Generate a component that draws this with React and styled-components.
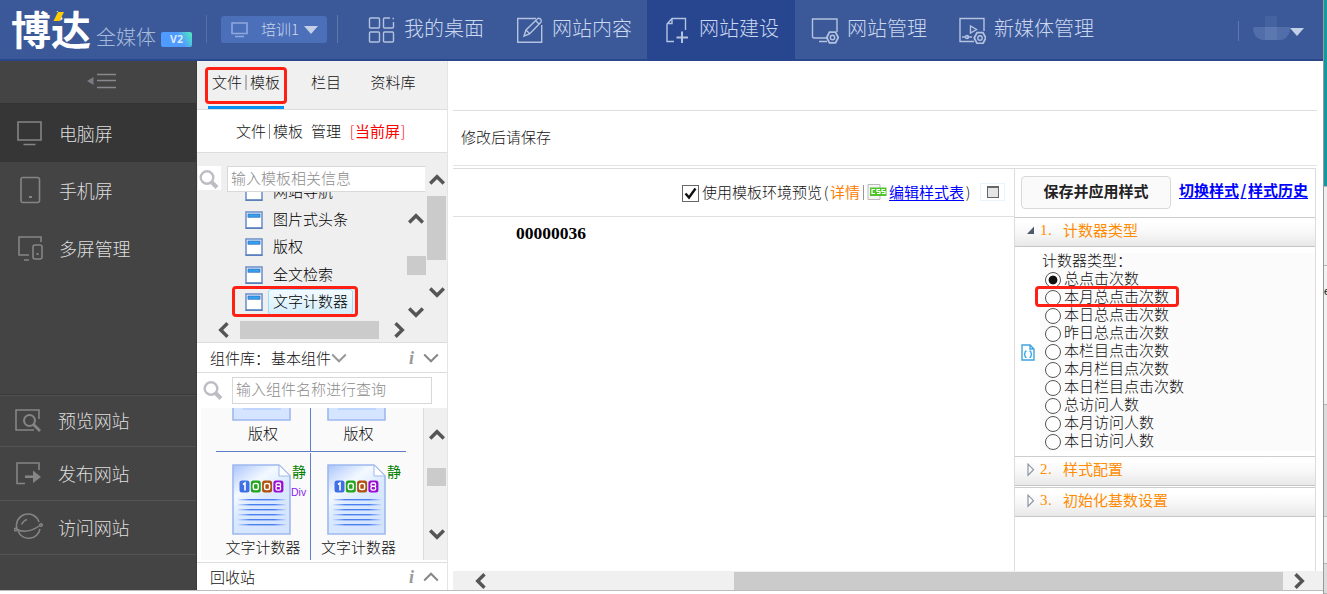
import React from 'react';
import styled, { createGlobalStyle } from 'styled-components';

const Global = createGlobalStyle`
  *, *::before, *::after { box-sizing: border-box; }
  html, body { margin: 0; padding: 0; background: #fff; overflow: hidden; }
  body { font: 300 15px/20px "Noto Sans CJK SC", sans-serif; color: #111; }
`;

const Screen = styled.div`
  display: flex;
  width: 1327px;
  height: 594px;
  overflow: hidden;
`;
const Page = styled.div`
  width: 1323px;
  height: 591px;
  flex: none;
  display: flex;
  flex-direction: column;
  border-bottom: 1px solid #bdbdbd;
`;
const Desktop = styled.div`
  width: 4px;
  flex: none;
  border-left: 1px solid #999;
  display: flex;
  flex-direction: column;
  overflow: hidden;
`;
const Strip = styled.div`
  height: ${p => p.$h}px;
  flex: none;
  background: ${p => p.$bg};
  border-bottom: 1px solid #b5b5b5;
  font: 11px/14px "Liberation Sans", sans-serif;
  color: #111;
  display: flex;
  align-items: flex-start;
`;
const EdgeText = styled.span`
  margin-top: 18px;
`;

/* ---------- header ---------- */
const Header = styled.header`
  height: 61px;
  flex: none;
  display: flex;
  background: #3b5998;
  border-bottom: 2px solid #29478a;
  color: #cbd8f0;
`;
const Brand = styled.div`
  width: 207px;
  display: flex;
  padding-left: 11px;
  border-right: 1px solid #5670a6;
  height: 28px;
  margin-top: 15px;
  position: relative;
`;
const BrandName = styled.span`
  font-size: 40px;
  line-height: 40px;
  font-weight: 700;
  color: #fff;
  margin-top: -7px;
  width: 84px;
  white-space: nowrap;
`;
const BrandSlash = styled.svg`
  position: absolute;
  left: 50px;
  top: -5px;
`;
const BrandSub = styled.span`
  font-size: 20px;
  line-height: 28px;
  color: #a8badc;
  margin: 8px 5px 0 1px;
  white-space: nowrap;
`;
const Version = styled.span`
  flex: none;
  width: 31px;
  height: 15px;
  margin-top: 17px;
  border-radius: 2px;
  background: linear-gradient(60deg, #4f9bff 60%, #50e3c2 95%);
  color: #d9eaff;
  font: 700 10.5px/15px "Open Sans", sans-serif;
  text-align: center;
`;
const SiteSelect = styled.div`
  width: 106px;
  height: 27px;
  margin: 16px 10px 0 14px;
  border-radius: 3px;
  background: #4b6fb8;
  display: flex;
  align-items: center;
  padding: 0 9px 0 10px;
  line-height: 23px;
  span { margin: -2px auto 0 13px; }
`;
const Divider = styled.i`
  width: 1px;
  height: ${p => p.$h || 28}px;
  margin-top: ${p => p.$t || 15}px;
  background: #6079ad;
`;
const Nav = styled.nav`
  display: flex;
  margin-left: 14px;
`;
const NavItem = styled.a`
  width: ${p => p.$w}px;
  height: 61px;
  padding: 14px 0 0 ${p => p.$pad || 16}px;
  display: flex;
  gap: ${p => p.$gap || 6}px;
  font-size: 20px;
  line-height: 27px;
  white-space: nowrap;
  background: ${p => (p.$active ? '#27468f' : 'transparent')};
  svg { margin-top: 2px; flex: none; }
`;
const User = styled.div`
  margin-left: auto;
  display: flex;
  width: 85px;
`;
const Avatar = styled.svg`
  margin: 16px 0 0 14px;
`;
const Caret = styled.i`
  width: 0;
  border: 7px solid transparent;
  border-top: 8px solid #c3cfe7;
  border-bottom: 0;
  margin-top: ${p => p.$t || 0}px;
`;

/* ---------- sidebar ---------- */
const Body = styled.div`
  display: flex;
  flex: 1;
  min-height: 0;
`;
const Sidebar = styled.aside`
  width: 197px;
  flex: none;
  background: #444;
  border-right: 1px solid #3a3a3a;
  display: flex;
  flex-direction: column;
`;
const Collapse = styled.div`
  height: 43px;
  border-bottom: 1px solid #333;
  padding: 12px 0 0 86px;
`;
const SideItem = styled.a`
  height: ${p => p.$h || 58}px;
  padding: 0 0 1px 14px;
  display: flex;
  align-items: center;
  gap: ${p => p.$gap || 13}px;
  font-size: 18px;
  line-height: 26px;
  color: #dedede;
  background: ${p => (p.$active ? '#363636' : 'transparent')};
  border-bottom: ${p => (p.$line ? '1px solid #545454' : '0')};
  letter-spacing: -0.15px;
  svg { flex: none; }
`;
const SideFoot = styled.div`
  margin-top: auto;
  height: 196px;
  border-top: 1px solid #383838;
  box-shadow: inset 0 1px #515151;
`;

/* ---------- left panel ---------- */
const Panel = styled.section`
  width: 251px;
  flex: none;
  border-right: 1px solid #e4e4e4;
  display: flex;
  flex-direction: column;
  background: #fff;
`;
const Tabs = styled.div`
  height: 49px;
  background: #f0f0f0;
  border-bottom: 1px solid #ddd;
  display: flex;
`;
const Tab = styled.div`
  position: relative;
  width: ${p => p.$w}px;
  margin-left: ${p => p.$ml}px;
  text-align: center;
  white-space: nowrap;
  line-height: 41px;
  height: 48px;
  border-bottom: 3px solid ${p => (p.$active ? '#0090f5' : 'transparent')};
`;
const Bar = styled.i`
  display: inline-block;
  width: ${p => p.$w || 1}px;
  height: 15px;
  margin: 0 3px;
  vertical-align: -2px;
  background: ${p => p.$c || '#b5b5b5'};
`;
const Mark = styled.div`
  position: absolute;
  left: ${p => p.$x}px;
  top: ${p => p.$y}px;
  width: ${p => p.$w}px;
  height: ${p => p.$h}px;
  border: 3px solid #ff2015;
  border-radius: 4px;
  pointer-events: none;
  z-index: 2;
`;
const PanelTitle = styled.div`
  height: 43px;
  border-bottom: 1px solid #ddd;
  padding-left: 39px;
  line-height: 42px;
  white-space: nowrap;
  display: flex;
  align-items: center;
`;
const Gap = styled.span`
  width: ${p => p.$w}px;
  flex: none;
`;
const Current = styled.span`
  color: #f00;
  display: flex;
  font-weight: 400;
`;
const Tree = styled.div`
  height: 189px;
  background: #efefef;
  display: flex;
`;
const TreeMain = styled.div`
  width: 229px;
  padding-top: 13px;
`;
const SearchRow = styled.div`
  display: flex;
  height: 26px;
  padding-left: 1px;
`;
const LibrarySearch = styled(SearchRow)`
  height: 35px;
  padding: 4px 0 0 5px;
`;
const SearchIcon = styled.span`
  width: 23px;
  height: 24px;
  display: flex;
  padding-top: 3px;
  margin-right: ${p => p.$gap}px;
  background: #fff;
`;
const Field = styled.div`
  width: 200px;
  height: ${p => p.$h || 26}px;
  line-height: 21px;
  border: 1px solid #d8d8d8;
  border-right-color: ${p => (p.$open ? '#efefef' : '#d8d8d8')};
  background: #fff;
  color: #8c8c8c;
  padding-left: 3px;
  white-space: nowrap;
`;
const TreeBody = styled.div`
  display: flex;
  height: 128px;
  position: relative;
`;
const TreeList = styled.div`
  width: 209px;
  overflow: hidden;
  display: flex;
  flex-direction: column;
  color: #000;
`;
const TreeItem = styled.div`
  height: 27.5px;
  flex: none;
  margin-top: ${p => p.$shift || 0}px;
  padding-left: 48px;
  display: flex;
  align-items: center;
  gap: 5px;
  svg { flex: none; }
`;
const TreeLabel = styled.span`
  height: 26px;
  line-height: 22px;
  padding: 0 4px 0 4px;
  border-radius: 3px;
  border: 1px solid ${p => (p.$active ? '#99defd' : 'transparent')};
  background: ${p => (p.$active ? 'linear-gradient(#f2fafe, #d5effc)' : 'transparent')};
`;
const VScroll = styled.div`
  width: 20px;
  padding-top: ${p => p.$t}px;
  display: flex;
  flex-direction: column;
  align-items: center;
  svg { flex: none; }
`;
const OuterScroll = styled(VScroll)`
  width: 21px;
`;
const LibraryScroll = styled(VScroll)`
  width: 23px;
  padding-top: 19px;
  padding-left: 2px;
  background: #f0f0f0;
`;
const Thumb = styled.i`
  flex: none;
  width: ${p => p.$w || 19}px;
  height: ${p => p.$h || 19}px;
  margin: ${p => p.$m || '0'};
  background: #cbcbcb;
`;
const HScroll = styled.div`
  display: flex;
  height: 19px;
  align-items: center;
  padding-left: ${p => p.$pl}px;
  background: ${p => p.$bg || 'transparent'};
  svg { flex: none; }
`;
const PanelBar = styled.div`
  height: ${p => p.$h}px;
  margin-top: ${p => p.$mt || 0}px;
  flex: none;
  border-top: 1px solid #ddd;
  border-bottom: ${p => (p.$bottom ? '1px solid #ddd' : '0')};
  display: flex;
  align-items: center;
  padding: 0 8px 0 13px;
  white-space: nowrap;
  line-height: 18px;
`;
const Info = styled.i`
  margin: 0 9px 0 auto;
  color: #999;
  font: italic 700 18px/20px "Liberation Serif", serif;
`;
const Library = styled.div`
  height: 152px;
  display: flex;
  padding-left: 4px;
`;
const LibraryGrid = styled.div`
  width: 223px;
  height: 152px;
  background: #fafafa;
  border-right: 1px solid #ddd;
  padding-left: 15px;
  display: grid;
  grid-template-columns: 95px 95px;
  grid-template-rows: 44px 108px;
  overflow: hidden;
`;
const Cell = styled.div`
  display: flex;
  flex-direction: column;
  justify-content: flex-end;
  border-bottom: ${p => (p.$top ? '1px solid #5c7fc8' : '0')};
  border-right: ${p => (p.$left ? '1px solid #5c7fc8' : '0')};
  margin-top: ${p => (p.$top ? 0 : 1)}px;
  overflow: hidden;
`;
const CellIcon = styled.div`
  display: flex;
  padding-left: 16px;
  svg { flex: none; }
`;
const CellTag = styled.div`
  color: #008000;
  font-size: 14px;
  line-height: 15px;
  font-weight: 400;
  padding-left: 1px;
`;
const DivTag = styled.div`
  color: #8a1cf0;
  font: 400 10.5px/20px "Liberation Sans", sans-serif;
  padding-top: 3px;
`;
const CellLabel = styled.div`
  text-align: center;
  height: ${p => p.$h}px;
  padding-top: 2px;
  line-height: 20px;
  white-space: nowrap;
`;

/* ---------- main ---------- */
const Main = styled.main`
  flex: 1;
  display: flex;
  flex-direction: column;
  padding-left: 5px;
  min-width: 0;
`;
const MainTop = styled.div`
  height: 50px;
  width: 864px;
  border-bottom: 1px solid #dedede;
`;
const Notice = styled.div`
  height: 55px;
  width: 864px;
  border-bottom: 1px solid #e4e4e4;
  padding-left: 8px;
  line-height: 52px;
`;
const Work = styled.div`
  height: 403px;
  margin-top: 2px;
  width: 863px;
  border-top: 1px solid #dcdcdc;
  border-right: 1px solid #dcdcdc;
  display: flex;
`;
const Preview = styled.div`
  width: 561px;
`;
const Toolbar = styled.div`
  height: 48px;
  border-bottom: 1px solid #e0e0e0;
  display: flex;
  align-items: center;
  padding: 0 0 1px 229px;
  white-space: nowrap;
`;
const CheckBox = styled.span`
  width: 17px;
  height: 17px;
  margin: 3px 3px 0 0;
  border: 1px solid #666;
  flex: none;
  svg { display: block; }
`;
const Detail = styled.a`
  color: #ff8000;
  font-weight: 400;
`;
const Link = styled.a`
  color: #00f;
  text-decoration: underline;
  text-underline-offset: 2px;
  font-weight: ${p => (p.$bold ? 700 : 400)};
`;
const Paren = styled.span`
  width: 8px;
  text-align: center;
`;
const WindowBox = styled.span`
  width: 25px;
  height: 18px;
  margin-left: 8px;
  border: 1px solid #eaf3fc;
  display: flex;
  justify-content: center;
  align-items: center;
  &::before {
    content: "";
    width: 12px;
    height: 12px;
    border: 2px solid #666;
    border-width: 2px 1px 1px;
    background: #e5e5e5;
  }
`;
const Counter = styled.div`
  font: 700 17.5px/20px "Liberation Serif", serif;
  color: #000;
  padding: 6px 0 0 63px;
`;
const Settings = styled.div`
  width: 301px;
  border-left: 1px solid #dcdcdc;
`;
const Actions = styled.div`
  height: 47px;
  display: flex;
  padding: 7px 0 0 6px;
  gap: 8px;
  white-space: nowrap;
  line-height: 28px;
`;
const SaveButton = styled.button`
  width: 150px;
  height: 33px;
  border: 1px solid #d9d9d9;
  border-radius: 4px;
  background: #fafafa;
  font: 700 15px/20px "Noto Sans CJK SC", sans-serif;
  color: #222;
  padding: 0 0 3px;
`;
const Slash = styled.span`
  display: inline-block;
  width: 9px;
  text-align: center;
  text-decoration: underline;
  text-underline-offset: 2px;
`;
const FoldHead = styled.div`
  height: 30px;
  margin-top: ${p => p.$mt || 0}px;
  border-top: 1px solid #cdcdcd;
  border-bottom: 1px solid #c6c6c6;
  background: linear-gradient(#fff 15%, #f7f7f7 55%, #e8e8e8);
  display: flex;
  padding-left: 11px;
  line-height: 23px;
  color: #ff8c00;
  font-weight: 400;
  svg { margin: 6px 5px 0 0; flex: none; }
`;
const FoldNo = styled.span`
  width: 23px;
  font-family: "Liberation Serif", "Noto Sans CJK SC", serif;
  letter-spacing: 0.5px;
  padding-top: 1px;
`;
const FoldBody = styled.div`
  height: 209px;
  padding-top: 6px;
  display: flex;
`;
const CodeCol = styled.div`
  width: 25px;
  padding: 91px 0 0 6px;
`;
const Options = styled.div`
  flex: 1;
  height: 198px;
  background: #fbfbfb;
  padding-left: 3px;
  position: relative;
`;
const OptionTitle = styled.div`
  line-height: 14px;
  height: 17px;
  margin-left: -1px;
`;
const Option = styled.label`
  display: flex;
  height: 18.05px;
  line-height: 15px;
  gap: 3px;
  padding-left: 2px;
`;
const Radio = styled.i`
  width: 16px;
  height: 16px;
  margin-top: 2px;
  border: 1px solid #555;
  border-radius: 50%;
  background: ${p => (p.$on ? 'radial-gradient(#111 0 4px, #fff 4.8px)' : '#fff')};
`;

const Chevron = ({ dir, w = 16, c = '#555', thin }) => {
  const rot = { up: 0, right: 90, down: 180, left: 270 }[dir];
  return (
    <svg width={w} height={w} viewBox="0 0 16 16">
      <path
        transform={`rotate(${rot} 8 8)`}
        d="M1.2 11.5 8 4.7 14.8 11.5"
        fill="none"
        stroke={c}
        strokeWidth={thin ? 2 : 3.4}
      />
    </svg>
  );
};
const Glass = () => (
  <svg width="22" height="22" viewBox="0 0 22 22" fill="none" stroke="#bdbdc4">
    <circle cx="9" cy="8.5" r="6.3" strokeWidth="2.4" />
    <path d="m13.5 13 5.5 5.5" strokeWidth="4" />
  </svg>
);
const PageIcon = () => (
  <svg width="18" height="18" viewBox="0 0 18 18">
    <rect x="1" y="1" width="16" height="16" fill="#fff" stroke="#6f93cc" strokeWidth="1.6" />
    <path d="M.5 17.3h17" stroke="#5b7fb8" strokeWidth="1.4" />
    <rect x="3" y="3" width="12" height="3.2" fill="#36a3ee" stroke="#2f6fc4" strokeWidth=".8" />
  </svg>
);
const DocIcon = ({ id }) => (
  <svg width="59" height="71" viewBox="0 0 59 71">
    <defs>
      <linearGradient id={id} x1="0" y1="0" x2=".6" y2="1">
        <stop offset="0" stopColor="#a9c4fb" />
        <stop offset=".35" stopColor="#f4f9ff" />
        <stop offset=".6" stopColor="#d9e9ff" />
        <stop offset="1" stopColor="#d4e4ff" />
      </linearGradient>
      <linearGradient id={`${id}Line`}>
        <stop offset="0" stopColor="#4c7ef0" stopOpacity=".1" />
        <stop offset=".25" stopColor="#4c7ef0" />
        <stop offset=".75" stopColor="#4c7ef0" />
        <stop offset="1" stopColor="#4c7ef0" stopOpacity=".1" />
      </linearGradient>
    </defs>
    <path d="M1 1h46l11 11v58H1z" fill={`url(#${id})`} stroke="#9db9ee" strokeWidth="1.6" />
    <path d="M47 1v11h11z" fill="#fff" stroke="#9db9ee" />
    {['#3f6fe6', '#23a51d', '#b1500f', '#9a0ed0'].map((c, i) => (
      <g key={c}>
        <rect x={7.5 + i * 11.3} y="16.5" width="10" height="12" rx="2.5" fill={c} />
        {i === 0 && <path d="M11 20.5 13 19v7.5" stroke="#fff" strokeWidth="1.6" fill="none" />}
        {(i === 1 || i === 2) && (
          <rect x={10 + i * 11.3} y="19.5" width="5" height="6" rx="1.6" fill="none" stroke="#fff" strokeWidth="1.5" />
        )}
        {i === 3 && (
          <g fill="none" stroke="#fff" strokeWidth="1.3">
            <rect x="44" y="19" width="4.6" height="3.4" rx="1.4" />
            <rect x="44" y="22.4" width="4.6" height="3.8" rx="1.4" />
          </g>
        )}
      </g>
    ))}
    {[35, 40, 45, 50, 55, 60].map(y => (
      <rect key={y} x="6" y={y} width="48" height="1.4" fill={`url(#${id}Line)`} />
    ))}
  </svg>
);
const DocBottom = () => (
  <svg width="59" height="13" viewBox="0 0 59 13">
    <path d="M1-2v14h57V-2z" fill="#d5e4ff" stroke="#9db9ee" strokeWidth="1.6" />
    <path d="M11 1h38" stroke="#a9c6fb" />
  </svg>
);
const Line = ({ w = 28, h = 28, sw = 1.4, c = '#b3c2e0', children }) => (
  <svg width={w} height={h} viewBox={`0 0 ${w} ${h}`} fill="none" stroke={c} strokeWidth={sw}>
    {children}
  </svg>
);
const Gear = ({ x, y }) => (
  <g transform={`translate(${x} ${y})`}>
    <path d="M-3-5.3h6L5.8 0 3 5.3h-6L-5.8 0z" strokeWidth="1.8" />
    <circle r="2.2" />
  </g>
);
const FoldArrow = ({ open }) => (
  <svg width="9" height="14" viewBox="0 0 9 14">
    {open ? (
      <path d="M8 2.5V10H1z" fill="#4c5b6b" />
    ) : (
      <path d="M2 1.2v11L7.5 6.7z" fill="#fff" stroke="#8b95a5" strokeWidth="1.2" />
    )}
  </svg>
);

const options = [
  '总点击次数', '本月总点击次数', '本日总点击次数', '昨日总点击次数', '本栏目点击次数',
  '本月栏目点次数', '本日栏目点击次数', '总访问人数', '本月访问人数', '本日访问人数',
];
const tree = ['网站导航', '图片式头条', '版权', '全文检索', '文字计数器'];

export default function App() {
  return (
    <>
      <Global />
      <Screen>
        <Page>
          <Header>
            <Brand>
              <BrandName>博达</BrandName>
              <BrandSlash width="15" height="14" viewBox="0 0 15 14">
                <path d="M1 2h12L9 13 0 14z" fill="#3b5998" />
                <path d="M8 2h6L9.500 11H3.500z" fill="#fc0" />
              </BrandSlash>
              <BrandSub>全媒体</BrandSub>
              <Version>V2</Version>
            </Brand>
            <SiteSelect>
              <Line w={17} h={17} c="#8fa9dc" sw={1.6}>
                <path d="M1 2h15v10.500H1zM4 15.500h9" />
              </Line>
              <span>培训1</span>
              <Caret />
            </SiteSelect>
            <Divider />
            <Nav>
              <NavItem $w={149} $gap={8}>
                <Line>
                  <rect x="1.500" y="2" width="10" height="10" rx="1" />
                  <path d="M22 2h-5.500q-1 0-1 1v8q0 1 1 1h8q1 0 1-1V6M24.500 2.500h1.500" />
                  <rect x="1.500" y="16" width="10" height="10" rx="1" />
                  <rect x="15.500" y="16" width="10" height="10" rx="1" />
                </Line>
                我的桌面
              </NavItem>
              <NavItem $w={146} $gap={8} $pad={15}>
                <Line>
                  <path d="M20 2.500H1.700v23.800h24V9" />
                  <path d="m8 20 2-6L21.500 2.700q1.500-1 3.200.5 1.200 1.500.2 3L13.500 18zM20 5l3.500 3.500M10 14l4 4" />
                </Line>
                网站内容
              </NavItem>
              <NavItem $w={148} $active $pad={18} $gap={6}>
                <Line>
                  <path d="M9 25.500H2V8l5-5.500h13.500V14M7 2v5.500H2" />
                  <path d="M17 15.500v11.500M11.500 21.500h11.500" strokeWidth="2" />
                </Line>
                网站建设
              </NavItem>
              <NavItem $w={147} $gap={8}>
                <Line>
                  <path d="M17 22H3q-1.500 0-1.500-1.500V3H26v13M8 25.500h8" />
                  <Gear x={21.500} y={21.500} />
                </Line>
                网站管理
              </NavItem>
              <NavItem $w={160} $gap={8}>
                <Line>
                  <path d="M16 25.500H2V2.500h24V15M12.500 10v7l6-3.500zM4 21h3M9 21h5" />
                  <circle cx="9" cy="21" r="1.500" />
                  <Gear x={22} y={22} />
                </Line>
                新媒体管理
              </NavItem>
            </Nav>
            <User>
              <Divider $h={20} $t={21} />
              <Avatar width="37" height="24" viewBox="0 0 37 24">
                <path d="M12 0h12v11H12z" fill="#4562a0" />
                <path d="M0 11h37v4q-3 9-10 9H9Q0 22 0 11z" fill="#526eaa" />
                <path d="M12 11h12v13H12z" fill="#5d78b0" />
              </Avatar>
              <Caret $t={28} />
            </User>
          </Header>

          <Body>
            <Sidebar>
              <Collapse>
                <svg width="30" height="17" viewBox="0 0 30 17">
                  <path d="M7.500 4v8L1 8z" fill="#7c7b84" />
                  <path d="M11 1.500h19M11 7.500h19M11 14.500h19" stroke="#89898d" strokeWidth="1.600" />
                </svg>
              </Collapse>
              <SideItem $active>
                <Line w={32} h={30} c="#858585" sw={1.600}>
                  <path d="M4 4h23v18H4zM9.500 26.500h12" />
                </Line>
                电脑屏
              </SideItem>
              <SideItem $h={57}>
                <Line w={32} h={30} c="#858585" sw={1.600}>
                  <rect x="7" y="2.500" width="18.500" height="25" rx="2" />
                  <path d="M15 22h3" strokeWidth="2" />
                </Line>
                手机屏
              </SideItem>
              <SideItem>
                <Line w={32} h={30} c="#858585" sw={1.600}>
                  <path d="M15 22H5V4h22v5M10 27h5" />
                  <rect x="19" y="12" width="9" height="14" rx="2" />
                  <path d="M22.500 21h2" strokeWidth="2" />
                </Line>
                多屏管理
              </SideItem>
              <SideFoot>
                <SideItem $h={52} $line $gap={14}>
                  <Line w={30} h={30} c="#858585" sw={1.600}>
                    <path d="M20 25H2V5h23v9" />
                    <circle cx="15.500" cy="15.500" r="5.500" strokeWidth="2" />
                    <path d="m19.500 19.500 6.500 6.500" strokeWidth="2.800" />
                  </Line>
                  预览网站
                </SideItem>
                <SideItem $h={54} $line $gap={14}>
                  <Line w={30} h={30} c="#858585" sw={1.600}>
                    <path d="M11 25.500H3V5h22v7" />
                    <path d="M11 17.500h8v-5l8 6.500-8 6v-5h-8z" fill="#858585" stroke="none" />
                  </Line>
                  发布网站
                </SideItem>
                <SideItem $h={54} $line $gap={14}>
                  <Line w={30} h={30} c="#858585" sw={1.500}>
                    <path d="M3 17A11.500 11.500 0 0 1 25 10M4 19a11.500 11.500 0 0 0 22-2" />
                    <path d="M3 17.500q10 5 23-4" />
                    <circle cx="1.800" cy="17.500" r="1.300" />
                    <circle cx="27" cy="13" r="1.300" />
                    <path d="M7.500 12.500q2-4 5.500-5" />
                  </Line>
                  访问网站
                </SideItem>
              </SideFoot>
            </Sidebar>

            <Panel>
              <Tabs>
                <Tab $w={76} $ml={11} $active>
                  文件<Bar $w={2} />模板
                  <Mark $x={-3} $y={6} $w={82} $h={37} />
                </Tab>
                <Tab $w={32} $ml={26}>栏目</Tab>
                <Tab $w={46} $ml={28}>资料库</Tab>
              </Tabs>
              <PanelTitle>
                文件<Bar $c="#888" />模板<Gap $w={8} />管理<Gap $w={8} />
                <Current><Bracket>[</Bracket>当前屏<Bracket>]</Bracket></Current>
              </PanelTitle>
              <Tree>
                <TreeMain>
                  <SearchRow>
                    <SearchIcon $gap={6}><Glass /></SearchIcon>
                    <Field $open>输入模板相关信息</Field>
                  </SearchRow>
                  <TreeBody>
                    <TreeList>
                      {tree.map((name, i) => (
                        <TreeItem key={name} $shift={i === 0 ? -13.500 : 0}>
                          <PageIcon />
                          <TreeLabel $active={i === 4}>{name}</TreeLabel>
                        </TreeItem>
                      ))}
                    </TreeList>
                    <VScroll $t={19}>
                      <Chevron dir="up" />
                      <Thumb $m="29px 0" />
                      <Chevron dir="down" />
                    </VScroll>
                    <Mark $x={35} $y={94} $w={126} $h={31} />
                  </TreeBody>
                  <HScroll $pl={19}>
                    <Chevron dir="left" />
                    <Thumb $w={139} $h={18} $m="0 12px 0 8px" />
                    <Chevron dir="right" />
                  </HScroll>
                </TreeMain>
                <OuterScroll $t={19}>
                  <Chevron dir="up" />
                  <Thumb $h={64} $m="8px 0 24px" />
                  <Chevron dir="down" />
                </OuterScroll>
              </Tree>
              <PanelBar $h={31} $bottom>
                组件库：<Gap $w={1} /><span>基本组件</span>
                <Chevron dir="down" c="#999" thin />
                <Info>i</Info>
                <Chevron dir="down" c="#888" thin />
              </PanelBar>
              <LibrarySearch>
                <SearchIcon $gap={7}><Glass /></SearchIcon>
                <Field $h={27}>输入组件名称进行查询</Field>
              </LibrarySearch>
              <Library>
                <LibraryGrid>
                  <Cell $top $left>
                    <CellIcon><DocBottom /></CellIcon>
                    <CellLabel $h={30}>版权</CellLabel>
                  </Cell>
                  <Cell $top>
                    <CellIcon><DocBottom /></CellIcon>
                    <CellLabel $h={30}>版权</CellLabel>
                  </Cell>
                  <Cell $left>
                    <CellIcon>
                      <DocIcon id="docA" />
                      <div><CellTag>静</CellTag><DivTag>Div</DivTag></div>
                    </CellIcon>
                    <CellLabel $h={25}>文字计数器</CellLabel>
                  </Cell>
                  <Cell>
                    <CellIcon>
                      <DocIcon id="docB" />
                      <div><CellTag>静</CellTag></div>
                    </CellIcon>
                    <CellLabel $h={25}>文字计数器</CellLabel>
                  </Cell>
                </LibraryGrid>
                <LibraryScroll>
                  <Chevron dir="up" />
                  <Thumb $h={18} $m="25px 0 40px" />
                  <Chevron dir="down" />
                </LibraryScroll>
              </Library>
              <PanelBar $h={28} $mt={2}>
                回收站
                <Info>i</Info>
                <Chevron dir="up" c="#888" thin />
              </PanelBar>
            </Panel>

            <Main>
              <MainTop />
              <Notice>修改后请保存</Notice>
              <Work>
                <Preview>
                  <Toolbar>
                    <CheckBox>
                      <svg width="15" height="15" viewBox="0 0 15 15">
                        <path d="m2.500 7.500 3.500 4 6.500-9" fill="none" stroke="#111" strokeWidth="2.400" />
                      </svg>
                    </CheckBox>
                    使用模板环境预览<Paren>(</Paren>
                    <Detail>详情</Detail>
                    <Bar $c="#999" />
                    <svg width="20" height="16" viewBox="0 0 20 16">
                      <path d="M1 .5h12v15H1z" fill="#f4f4f4" stroke="#bbb" />
                      <rect x="3" y="3.500" width="16.500" height="8.500" fill="#4fc52c" />
                      <path d="M8 5.500H5v4h3M13 5.500h-3v2h3v2h-3M18 5.500h-3v2h3v2h-3" fill="none" stroke="#fff" strokeWidth="1.200" />
                    </svg>
                    <Gap $w={2} />
                    <Link>编辑样式表</Link><Paren>)</Paren>
                    <WindowBox />
                  </Toolbar>
                  <Counter>00000036</Counter>
                </Preview>
                <Settings>
                  <Actions>
                    <SaveButton>保存并应用样式</SaveButton>
                    <Link $bold>切换样式<Slash>/</Slash>样式历史</Link>
                  </Actions>
                  <FoldHead $mt={1}>
                    <FoldArrow open />
                    <FoldNo>1.</FoldNo>计数器类型
                  </FoldHead>
                  <FoldBody>
                    <CodeCol>
                      <svg width="14" height="17" viewBox="0 0 14 17" fill="none" stroke="#3fa3e0" strokeWidth="1.400">
                        <path d="M1 1h8l4 4v11H1zM9 1v4h4" />
                        <path d="M5.500 7q-1.500 0-1.500 1.500T3 10.500q1 0 1 1.500t1.500 1.500M8.500 7q1.500 0 1.500 1.500t1 2q-1 0-1 1.500t-1.500 1.500" />
                      </svg>
                    </CodeCol>
                    <Options>
                      <OptionTitle>计数器类型：</OptionTitle>
                      {options.map((o, i) => (
                        <Option key={o}><Radio $on={i === 0} />{o}</Option>
                      ))}
                      <Mark $x={-5} $y={33} $w={144} $h={21} />
                    </Options>
                  </FoldBody>
                  <FoldHead>
                    <FoldArrow /><FoldNo>2.</FoldNo>样式配置
                  </FoldHead>
                  <FoldHead $mt={1}>
                    <FoldArrow /><FoldNo>3.</FoldNo>初始化基数设置
                  </FoldHead>
                </Settings>
              </Work>
              <HScroll $pl={20} $bg="#f0f0f0">
                <Chevron dir="left" />
                <Thumb $w={549} $h={18} $m="0 8px 0 245px" />
                <Chevron dir="right" />
              </HScroll>
            </Main>
          </Body>
        </Page>
        <Desktop>
          <Strip $h={187} $bg="#129aa0" />
          <Strip $h={79} $bg="#efefef" />
          <Strip $h={139} $bg="#f2f2f2"><EdgeText>e</EdgeText></Strip>
          <Strip $h={112} $bg="#dcdcdc" />
          <Strip $h={47} $bg="#f0f0f0" />
          <Strip $h={30} $bg="#dcdcdc" />
        </Desktop>
      </Screen>
    </>
  );
}

const Bracket = styled(Paren)`
  width: 6px;
  font-weight: 300;
`;
